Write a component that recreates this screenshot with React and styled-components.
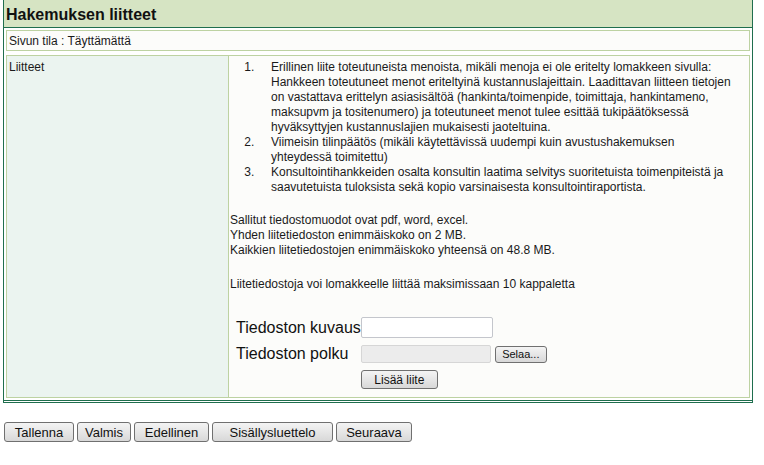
import React from 'react'
import styled, { createGlobalStyle } from 'styled-components'

const GlobalStyle = createGlobalStyle`
  body {
    margin: 0;
    background: #fff;
    font-family: "Liberation Sans", Arial, sans-serif;
    color: #1a1a1a;
  }
`

const Page = styled.div`
  width: 764px;
  height: 465px;
  overflow: hidden;
`

const Panel = styled.section`
  margin-left: 3px;
  width: 748px;
  border-left: 1px solid #1f6e4e;
  border-right: 1px solid #1f6e4e;
  border-bottom: 3px double #1f6e4e;
`

const Header = styled.h1`
  margin: 0;
  height: 27px;
  line-height: 29px;
  padding-left: 2px;
  background: #d6e4c3;
  border-bottom: 1px solid #1f6e4e;
  font-size: 16px;
  font-weight: bold;
  color: #111;
`

const Body = styled.div`
  display: flex;
  flex-direction: column;
  gap: 4px;
  padding: 2px;
`

const Box = styled.div`
  border: 1px solid #bdd2a2;
  background: #fcfcfa;
  font-size: 12px;
`

const StatusRow = styled(Box)`
  height: 19px;
  line-height: 21px;
  padding-left: 2px;
`

const AttachRow = styled(Box)`
  display: grid;
  grid-template-columns: 222px 1fr;
  height: 341px;
`

const LabelCell = styled.div`
  background: #ebf4f0;
  border-right: 1px solid #bdd2a2;
  padding: 4px 2px;
  line-height: 15px;
`

const ContentCell = styled.div`
  padding: 4px 4px 0 1px;
  line-height: 15px;
`

const List = styled.ol`
  margin: 0;
  padding-left: 41px;

  li::marker {
    content: counter(list-item) ".\\00a0\\00a0\\00a0\\00a0\\00a0";
  }
`

const Para = styled.p`
  margin: ${p => p.$top}px 0 0;
`

const Form = styled.div`
  display: grid;
  grid-template-columns: auto auto;
  justify-content: start;
  align-items: center;
  row-gap: 6px;
  margin: 25px 0 0 6px;
`

const FieldLabel = styled.label`
  font-size: 16px;
  line-height: 20px;
  color: #111;
`

const TextInput = styled.input`
  box-sizing: border-box;
  width: 132px;
  height: 21px;
  border: 1px solid #c4c6cc;
  border-radius: 2px;
  background: #fff;
  padding: 0 3px;
  font: 12px "Liberation Sans", Arial, sans-serif;
`

const PathInput = styled(TextInput)`
  width: 130px;
  height: 18px;
  background: #ececec;
  border-color: #d6d6d6;
`

const FileRow = styled.div`
  display: flex;
  align-items: center;
  gap: 4px;
`

const Button = styled.button`
  box-sizing: border-box;
  width: ${p => p.$w}px;
  height: ${p => p.$h || 20}px;
  padding: 0;
  border: 1px solid #707070;
  border-radius: 3px;
  background: linear-gradient(#f4f4f4, #e6e6e6 50%, #d8d8d8);
  font-family: "Liberation Sans", Arial, sans-serif;
  font-size: ${p => p.$size || 13}px;
  color: #111;
  cursor: pointer;
`

const Toolbar = styled.div`
  display: flex;
  gap: 3px;
  margin: 19px 0 0 4px;
`

const navButtons = [
  ['Tallenna', 70],
  ['Valmis', 54],
  ['Edellinen', 75],
  ['Sisällysluettelo', 121],
  ['Seuraava', 76],
]

export default function App() {
  return (
    <Page>
      <GlobalStyle />
      <Panel>
        <Header>Hakemuksen liitteet</Header>
        <Body>
          <StatusRow>Sivun tila : Täyttämättä</StatusRow>
          <AttachRow>
            <LabelCell>Liitteet</LabelCell>
            <ContentCell>
              <List>
                <li>
                  Erillinen liite toteutuneista menoista, mikäli menoja ei ole eritelty lomakkeen sivulla:
                  Hankkeen toteutuneet menot eriteltyinä kustannuslajeittain. Laadittavan liitteen tietojen
                  on vastattava erittelyn asiasisältöä (hankinta/toimenpide, toimittaja, hankintameno,
                  maksupvm ja tositenumero) ja toteutuneet menot tulee esittää tukipäätöksessä
                  hyväksyttyjen kustannuslajien mukaisesti jaoteltuina.
                </li>
                <li>
                  Viimeisin tilinpäätös (mikäli käytettävissä uudempi kuin avustushakemuksen<br />
                  yhteydessä toimitettu)
                </li>
                <li>
                  Konsultointihankkeiden osalta konsultin laatima selvitys suoritetuista toimenpiteistä ja
                  saavutetuista tuloksista sekä kopio varsinaisesta konsultointiraportista.
                </li>
              </List>
              <Para $top={18}>
                Sallitut tiedostomuodot ovat pdf, word, excel.<br />
                Yhden liitetiedoston enimmäiskoko on 2 MB.<br />
                Kaikkien liitetiedostojen enimmäiskoko yhteensä on 48.8 MB.
              </Para>
              <Para $top={19}>Liitetiedostoja voi lomakkeelle liittää maksimissaan 10 kappaletta</Para>
              <Form>
                <FieldLabel>Tiedoston kuvaus</FieldLabel>
                <TextInput type="text" />
                <FieldLabel>Tiedoston polku</FieldLabel>
                <FileRow>
                  <PathInput type="text" disabled />
                  <Button $w={52} $h={17} $size={11}>Selaa...</Button>
                </FileRow>
                <span />
                <Button $w={77} $h={19} $size={12}>Lisää liite</Button>
              </Form>
            </ContentCell>
          </AttachRow>
        </Body>
      </Panel>
      <Toolbar>
        {navButtons.map(([label, w]) => (
          <Button key={label} $w={w}>{label}</Button>
        ))}
      </Toolbar>
    </Page>
  )
}
